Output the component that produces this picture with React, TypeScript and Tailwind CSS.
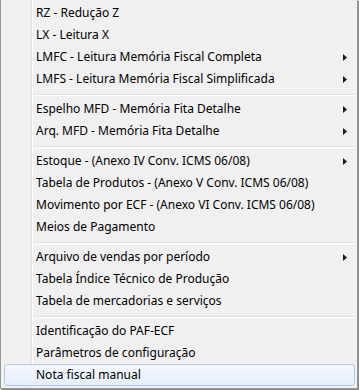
type Item = {
  label: string;
  submenu?: boolean;
  active?: boolean;
};

const groups: Item[][] = [
  [
    { label: 'RZ - Redução Z' },
    { label: 'LX - Leitura X' },
    { label: 'LMFC - Leitura Memória Fiscal Completa', submenu: true },
    { label: 'LMFS - Leitura Memória Fiscal Simplificada', submenu: true },
  ],
  [
    { label: 'Espelho MFD - Memória Fita Detalhe', submenu: true },
    { label: 'Arq. MFD - Memória Fita Detalhe', submenu: true },
  ],
  [
    { label: 'Estoque - (Anexo IV Conv. ICMS 06/08)', submenu: true },
    { label: 'Tabela de Produtos - (Anexo V Conv. ICMS 06/08)' },
    { label: 'Movimento por ECF - (Anexo VI Conv. ICMS 06/08)' },
    { label: 'Meios de Pagamento' },
  ],
  [
    { label: 'Arquivo de vendas por período', submenu: true },
    { label: 'Tabela Índice Técnico de Produção' },
    { label: 'Tabela de mercadorias e serviços' },
  ],
  [
    { label: 'Identificação do PAF-ECF' },
    { label: 'Parâmetros de configuração' },
    { label: 'Nota fiscal manual', active: true },
  ],
];

function MenuRow({ item }: { item: Item }) {
  return (
    <div
      className={`relative ml-[3px] mr-[2px] flex h-[22px] items-center justify-between rounded-[3px] border pl-[31px] pr-[7px] ${
        item.active
          ? 'border-[#aeccf2] bg-gradient-to-b from-[#f3f7fd] to-[#e6eefa]'
          : 'border-transparent'
      }`}
    >
      <span className="whitespace-nowrap">{item.label}</span>
      {item.submenu && (
        <svg width="4" height="7" viewBox="0 0 4 7" className="shrink-0">
          <path d="M0 0 L4 3.5 L0 7 Z" fill="#1a1a1a" />
        </svg>
      )}
    </div>
  );
}

export default function App() {
  return (
    <div className="h-[390px] w-[359px] overflow-hidden bg-white">
      <div
        className="relative h-[389px] w-[358px] border-b border-l border-r border-[#979797] bg-[#f0f0f0] pt-[2px] text-[12px] leading-none text-black shadow-[1px_1px_0_#8a8a8a]"
        style={{ fontFamily: '"Noto Sans", "Open Sans", sans-serif' }}
      >
        {/* gutter line */}
        <div className="pointer-events-none absolute bottom-0 left-[30px] top-0 w-[2px] border-l border-r border-l-[#e2e3e3] border-r-white" />

        {groups.map((group, gi) => (
          <div key={gi}>
            {gi > 0 && (
              <div className="flex h-[8px] items-start pl-[32px] pr-[2px] pt-[4px]">
                <div className="h-[2px] w-full border-b border-t border-b-white border-t-[#e0e0e0]" />
              </div>
            )}
            {group.map(item => (
              <MenuRow key={item.label} item={item} />
            ))}
          </div>
        ))}
      </div>
    </div>
  );
}
